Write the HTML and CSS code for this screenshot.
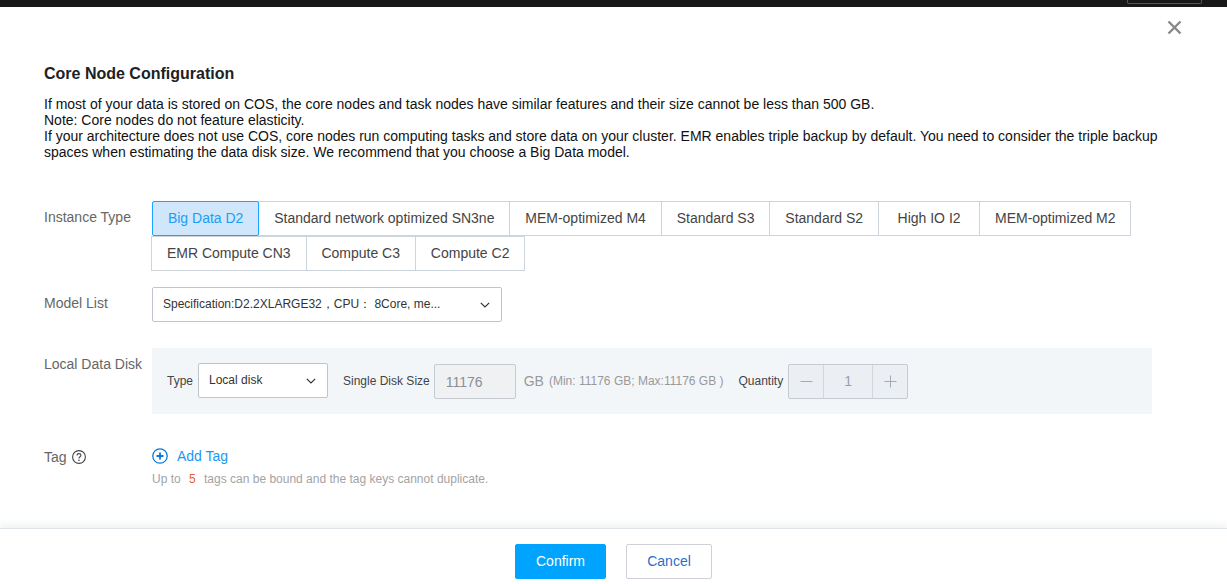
FILE: index.html
```html
<!DOCTYPE html>
<html lang="en">
<head>
<meta charset="utf-8">
<title>Core Node Configuration</title>
<link rel="stylesheet" href="styles.css">
</head>
<body>
<div class="topbar"><span class="topbar-btn"></span></div>
<div class="dialog">
  <button class="close" aria-label="Close">
    <svg width="15" height="15" viewBox="0 0 15 15"><path d="M1.5 1.5 13.5 13.5M13.5 1.5 1.5 13.5" stroke="#888" stroke-width="2.4" fill="none"/></svg>
  </button>
  <main class="content">
    <h2 class="title">Core Node Configuration</h2>
    <p class="desc">If most of your data is stored on COS, the core nodes and task nodes have similar features and their size cannot be less than 500 GB.<br>Note: Core nodes do not feature elasticity.<br>If your architecture does not use COS, core nodes run computing tasks and store data on your cluster. EMR enables triple backup by default. You need to consider the triple backup spaces when estimating the data disk size. We recommend that you choose a Big Data model.</p>

    <div class="row row-type">
      <div class="label">Instance Type</div>
      <div class="tabs">
        <div class="tab-line">
          <span class="tab active">Big Data D2</span><span class="tab">Standard network optimized SN3ne</span><span class="tab">MEM-optimized M4</span><span class="tab">Standard S3</span><span class="tab">Standard S2</span><span class="tab">High IO I2</span><span class="tab">MEM-optimized M2</span>
        </div>
        <div class="tab-line second">
          <span class="tab">EMR Compute CN3</span><span class="tab">Compute C3</span><span class="tab">Compute C2</span>
        </div>
      </div>
    </div>

    <div class="row row-model">
      <div class="label">Model List</div>
      <div class="select select-model">
        <span>Specification:D2.2XLARGE32，CPU： 8Core, me...</span>
        <svg class="chev" width="10" height="6" viewBox="0 0 10 6"><path d="M.8.8 5 5 9.2.8" stroke="#333" stroke-width="1.2" fill="none"/></svg>
      </div>
    </div>

    <div class="row row-disk">
      <div class="label">Local Data Disk</div>
      <div class="panel">
        <span class="small">Type</span>
        <div class="select select-type">
          <span class="type-text">Local disk</span>
          <svg class="chev" width="10" height="6" viewBox="0 0 10 6"><path d="M.8.8 5 5 9.2.8" stroke="#333" stroke-width="1.2" fill="none"/></svg>
        </div>
        <span class="small size-label">Single Disk Size</span>
        <div class="disabled-input">11176</div>
        <span class="unit">GB</span>
        <span class="range">(Min: 11176 GB; Max:11176 GB )</span>
        <span class="small qty-label">Quantity</span>
        <div class="stepper">
          <span class="step"><svg width="13" height="13" viewBox="0 0 13 13"><path d="M.5 6.500h12" stroke="#a5abb3" stroke-width="1"/></svg></span>
          <span class="step value">1</span>
          <span class="step"><svg width="13" height="13" viewBox="0 0 13 13"><path d="M.5 6.500h12M6.500.5v12" stroke="#a5abb3" stroke-width="1"/></svg></span>
        </div>
      </div>
    </div>

    <div class="row row-tag">
      <div class="label label-tag">Tag
        <svg width="14" height="14" viewBox="0 0 14 14"><circle cx="7" cy="7" r="6.400" stroke="#444" stroke-width="1.100" fill="none"/><path d="M5 5.400C5 4.200 5.900 3.600 7 3.600s2 .7 2 1.700c0 1.500-2 1.500-2 3.100" stroke="#444" stroke-width="1.100" fill="none"/><circle cx="7" cy="10.300" r=".8" fill="#444"/></svg>
      </div>
      <div class="tag-body">
        <div class="add-tag">
          <svg width="16" height="16" viewBox="0 0 16 16"><circle cx="8" cy="8" r="7.200" stroke="#0a78d8" stroke-width="1.300" fill="none"/><path d="M4.500 8h7M8 4.500v7" stroke="#0a78d8" stroke-width="1.800"/></svg>
          <span>Add Tag</span>
        </div>
        <div class="hint">Up to <em>5</em> tags can be bound and the tag keys cannot duplicate.</div>
      </div>
    </div>
  </main>
  <footer class="footer">
    <button class="btn primary">Confirm</button>
    <button class="btn">Cancel</button>
  </footer>
</div>
</body>
</html>
```

FILE: styles.css
```css
* { box-sizing: border-box; }
html, body { margin: 0; height: 100%; overflow: hidden; }
body {
  font-family: "Liberation Sans", Arial, sans-serif;
  font-size: 14px;
  color: #222;
  display: flex;
  flex-direction: column;
  background: #fff;
}
.topbar {
  height: 7px;
  background: #181818;
  display: flex;
  justify-content: flex-end;
  flex: none;
  overflow: hidden;
}
.topbar-btn {
  width: 75px;
  height: 4px;
  margin-right: 25px;
  border: 1px solid #555;
  border-top: 0;
  border-radius: 0 0 2px 2px;
}
.dialog {
  flex: 1;
  min-height: 0;
  display: flex;
  flex-direction: column;
  position: relative;
}
.close {
  position: absolute;
  top: 13px;
  right: 45px;
  width: 15px;
  height: 15px;
  padding: 0;
  border: 0;
  background: none;
  display: flex;
}
.content {
  flex: 1;
  min-height: 0;
  padding: 58px 44px 0;
}
.title {
  margin: 0;
  font-size: 16px;
  line-height: 18px;
  font-weight: 700;
  color: #1d2126;
}
.desc {
  margin: 13px 0 0;
  line-height: 16px;
  font-size: 14px;
  color: #111;
  width: 1130px;
}
.row { display: flex; }
.label {
  width: 108px;
  flex: none;
  color: #666;
  line-height: 16px;
}
.row-type { margin-top: 41px; }
.row-type .label { padding-top: 8px; }
.tab-line { display: flex; }
.tab-line.second { margin-left: -1px; }
.tab {
  height: 35px;
  min-width: 102px;
  line-height: 33px;
  padding: 0 14.92px;
  border: 1px solid #ced4dc;
  margin-left: -1px;
  color: #444;
  background: #fff;
  text-align: center;
  white-space: nowrap;
}
.tab-line > .tab:first-child { margin-left: 0; }
.tab.active {
  background: #d0e6fb;
  border-color: #1aa3ff;
  color: #1e9cf5;
  border-radius: 2px;
  position: relative;
}
.row-model { margin-top: 16px; }
.row-model .label { padding-top: 8px; }
.select {
  height: 35px;
  background: #fff;
  border: 1px solid #c0c5cc;
  border-radius: 2px;
  display: flex;
  align-items: center;
  justify-content: space-between;
  font-size: 12px;
  color: #333;
}
.select-model { width: 350px; padding: 0 11px 0 10px; }
.row-disk { margin-top: 26px; }
.row-disk .label { padding-top: 8px; }
.panel {
  width: 1000px;
  height: 66px;
  background: #f3f6f9;
  display: flex;
  align-items: center;
  padding-left: 15px;
  white-space: nowrap;
}
.small { font-size: 12px; color: #444; }
.select-type {
  width: 130px;
  margin: -1px 0 0 5px;
  padding: 0 11px 0 10px;
}
.type-text { padding-bottom: 2px; }
.size-label { margin-left: 15px; }
.disabled-input {
  width: 82px;
  height: 35px;
  margin-left: 4px;
  padding-left: 11px;
  line-height: 34px;
  background: #eff1f3;
  border: 1px solid #c6cbd2;
  border-radius: 2px;
  color: #8a8f96;
}
.unit { margin-left: 8px; color: #999; }
.range { margin-left: 5px; font-size: 12px; color: #999; }
.qty-label { margin-left: 15px; }
.stepper {
  margin-left: 5px;
  display: flex;
  width: 120px;
  height: 35px;
  border: 1px solid #c6cbd2;
  border-radius: 2px;
  background: #ebeef2;
}
.step {
  width: 34px;
  display: flex;
  align-items: center;
  justify-content: center;
  color: #9aa0a8;
  font-size: 14px;
}
.step.value {
  flex: 1;
  border-left: 1px solid #d3d7dc;
  border-right: 1px solid #d3d7dc;
}
.row-tag { margin-top: 34px; }
.label-tag { display: flex; align-items: center; gap: 5px; height: 16px; padding-top: 2px; }
.add-tag {
  display: flex;
  align-items: center;
  gap: 9px;
  color: #1c96f5;
  height: 16px;
}
.hint { margin-top: 7px; font-size: 12px; line-height: 16px; color: #a3a3a3; }
.hint em { font-style: normal; color: #f25c2e; margin: 0 5px; }
.footer {
  flex: none;
  height: 56px;
  position: relative;
  display: flex;
  justify-content: center;
  align-items: flex-start;
  gap: 20px;
  padding: 15px 0 0;
  border-top: 1px solid #dfe4e8;
  box-shadow: 0 -4px 6px rgba(215, 222, 228, .35);
  background: #fff;
}
.btn {
  width: 86px;
  height: 35px;
  font: 14px "Liberation Sans", Arial, sans-serif;
  background: #fff;
  border: 1px solid #ced2d8;
  border-radius: 2px;
  color: #2a6fc9;
  padding: 0 0 1px;
}
.btn.primary {
  width: 91px;
  background: #00a4ff;
  border-color: #00a4ff;
  color: #fff;
}
```
